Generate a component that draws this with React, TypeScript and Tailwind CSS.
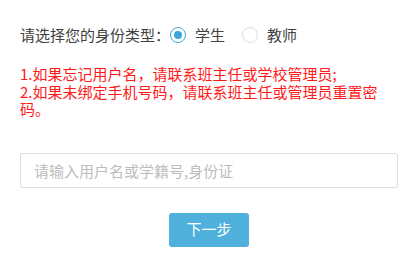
import React, { useState } from 'react';

const font = { fontFamily: '"Noto Sans CJK SC", "Noto Sans", sans-serif' };

function Radio({ checked }: { checked: boolean }) {
    return checked ? (
        <span className="flex h-[16px] w-[16px] items-center justify-center rounded-full border-[1.5px] border-[#3ea6dd]">
            <span className="h-[8px] w-[8px] rounded-full bg-[#3ea6dd]" />
        </span>
    ) : (
        <span className="h-[16px] w-[16px] rounded-full border border-[#dcdcdc]" />
    );
}

export default function App() {
    const [role, setRole] = useState('student');

    return (
        <div className="min-h-[254px] w-[418px] bg-white pt-[25px] pl-[20px]" style={font}>
            <div className="flex h-[20px] items-center text-[15px] leading-[20px] text-[#404040]">
                <span className="w-[150px]">请选择您的身份类型：</span>
                <button className="flex items-center gap-[9px]" onClick={() => setRole('student')}>
                    <Radio checked={role === 'student'} />
                    <span>学生</span>
                </button>
                <button className="ml-[17px] flex items-center gap-[9px]" onClick={() => setRole('teacher')}>
                    <Radio checked={role === 'teacher'} />
                    <span>教师</span>
                </button>
            </div>

            <div className="mt-[20px] w-[364px] text-[15px] leading-[17.5px] text-[#ff1a1a]">
                <p>1.如果忘记用户名，请联系班主任或学校管理员;</p>
                <p>2.如果未绑定手机号码，请联系班主任或管理员重置密码。</p>
            </div>

            <input
                type="text"
                placeholder="请输入用户名或学籍号,身份证"
                className="mt-[35px] h-[35px] w-[378px] rounded-[2px] border border-[#dedede] px-[13px] text-[15px] text-[#333] outline-none placeholder:text-[#bcbcbc]"
                style={font}
            />

            <div className="mt-[25px] flex w-[378px] justify-center">
                <button className="h-[34px] w-[80px] rounded-[3px] bg-[#4fb0dc] text-[15px] text-white">下一步</button>
            </div>
        </div>
    );
}
